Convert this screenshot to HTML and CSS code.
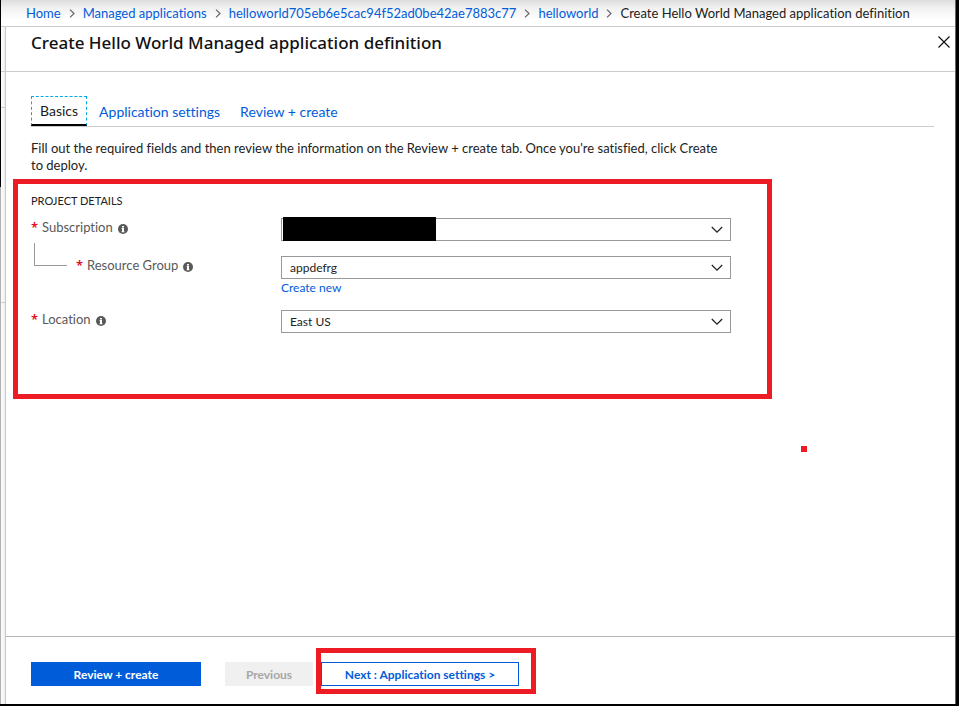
FILE: index.html
```html
<!DOCTYPE html>
<html lang="en">
<head>
<meta charset="utf-8">
<meta name="viewport" content="width=device-width, initial-scale=1">
<title>Create Hello World Managed application definition</title>
<link rel="stylesheet" href="styles.css">
</head>
<body>
<svg class="defs" aria-hidden="true">
  <symbol id="info" viewBox="0 0 10 10"><circle cx="5" cy="5" r="5" fill="#595959"/><path d="M4 2h2v1.500H4zM3.500 4H6v3.500h.6v.8H3.400v-.8H4V4.800h-.5z" fill="#fff"/></symbol>
  <symbol id="chevron" viewBox="0 0 12 8"><path d="M.8 1 6 6.200 11.200 1" fill="none" stroke="#222" stroke-width="1.300"/></symbol>
  <symbol id="crumb" viewBox="0 0 6 9"><path d="M1 .6 5 4.500 1 8.400" fill="none" stroke="#666" stroke-width="1.200"/></symbol>
</svg>
<div class="window">
  <nav class="breadcrumb" aria-label="Breadcrumb">
    <a href="#">Home</a>
    <svg class="sep"><use href="#crumb"/></svg>
    <a href="#">Managed applications</a>
    <svg class="sep"><use href="#crumb"/></svg>
    <a href="#">helloworld705eb6e5cac94f52ad0be42ae7883c77</a>
    <svg class="sep"><use href="#crumb"/></svg>
    <a href="#">helloworld</a>
    <svg class="sep"><use href="#crumb"/></svg>
    <span>Create Hello World Managed application definition</span>
  </nav>
  <div class="workspace">
    <div class="rail" aria-hidden="true"><i class="rail-head"></i><i class="rail-tools"></i><i class="rail-body"></i></div>
    <main class="blade">
      <header class="blade-head">
        <h1>Create Hello World Managed application definition</h1>
        <button class="close" type="button" aria-label="Close"><svg viewBox="0 0 12 12"><path d="M.5.5l11 11M11.500.5l-11 11" stroke="#111" stroke-width="1.200"/></svg></button>
      </header>
      <form class="content" id="definition">
        <div class="tabs" role="tablist">
          <button class="tab active" type="button" role="tab" aria-selected="true">Basics</button>
          <button class="tab" type="button" role="tab" aria-selected="false">Application settings</button>
          <button class="tab" type="button" role="tab" aria-selected="false">Review + create</button>
        </div>
        <p class="intro">Fill out the required fields and then review the information on the Review + create tab. Once you're satisfied, click Create to deploy.</p>
        <section class="details">
          <h2>PROJECT DETAILS</h2>
          <div class="row">
            <div class="label"><b>*</b><label for="subscription">Subscription</label><svg class="info"><use href="#info"/></svg></div>
            <div class="field"><select id="subscription"><option></option></select><svg class="chevron"><use href="#chevron"/></svg><span class="redacted"></span></div>
          </div>
          <div class="row child">
            <div class="label"><i class="elbow"></i><b>*</b><label for="group">Resource Group</label><svg class="info"><use href="#info"/></svg></div>
            <div class="field"><select id="group"><option>appdefrg</option></select><svg class="chevron"><use href="#chevron"/></svg></div>
          </div>
          <a class="create-new" href="#">Create new</a>
          <div class="row">
            <div class="label"><b>*</b><label for="location">Location</label><svg class="info"><use href="#info"/></svg></div>
            <div class="field"><select id="location"><option>East US</option></select><svg class="chevron"><use href="#chevron"/></svg></div>
          </div>
        </section>
        <span class="marker"></span>
      </form>
      <footer class="actions">
        <button class="btn primary" type="submit" form="definition">Review + create</button>
        <button class="btn previous" type="button" disabled>Previous</button>
        <div class="next-wrap"><button class="btn next" type="button">Next : Application settings &gt;</button></div>
      </footer>
    </main>
  </div>
</div>
</body>
</html>
```
FILE: styles.css
```css
* { box-sizing: border-box; }
body {
  margin: 0;
  min-height: 100vh;
  display: flex;
  background: #000;
  color: #222;
  font: 13px/17px Lato, "Noto Sans", sans-serif;
  font-variant-ligatures: none;
}
button, select { font: inherit; font-variant-ligatures: none; color: inherit; }
a { color: #015cda; text-decoration: none; }
.defs { position: absolute; width: 0; height: 0; }

.window {
  position: relative;
  flex: 1;
  min-width: 0;
  display: flex;
  flex-direction: column;
  margin: 0 3px 2px 1px;
  border-right: 1px solid #666;
  background: #fff;
}
.window::before {
  content: "";
  position: absolute;
  left: -1px;
  top: 187px;
  bottom: 0;
  width: 1px;
  background: #b0b0b0;
}
.breadcrumb {
  display: flex;
  align-items: center;
  gap: 8px;
  height: 27px;
  padding-left: 25px;
  border-bottom: 1px solid #ccc;
  background: linear-gradient(#dcdcdc, #f1f1f1 8px, #fff 20px);
  white-space: nowrap;
}
.sep { flex: none; width: 6px; height: 9px; }

.workspace { flex: 1; display: flex; }
.rail {
  display: flex;
  flex-direction: column;
  width: 5px;
  border-right: 1px solid #c8c8c8;
  background: linear-gradient(90deg, #fff, #eee);
}
.rail i { border-bottom: 1px solid #ccc; }
.rail-head { height: 45px; }
.rail-tools { height: 36px; }
.rail-body { height: 195px; }

.blade { flex: 1; min-width: 0; display: flex; flex-direction: column; }
.blade-head {
  display: flex;
  justify-content: space-between;
  align-items: flex-start;
  height: 45px;
  padding: 4px 5px 0 25px;
  border-bottom: 1px solid #ccc;
}
h1 { margin: 0; font-family: "Noto Sans", sans-serif; font-size: 17px; line-height: 24px; font-weight: 500; color: #111; }
.close { padding: 5px 0; border: 0; background: none; line-height: 0; }
.close svg { width: 12px; height: 12px; }

.content { position: relative; flex: 1; padding: 24px 21px 0 25px; }
.tabs { display: flex; height: 31px; border-bottom: 1px solid #ccc; }
.tab {
  height: 30px;
  margin-right: 12px;
  padding: 0 4px;
  border: 0;
  background: none;
  color: #015cda;
  font-size: 14px;
}
.tab.active {
  padding: 0 8px;
  margin-right: 8px;
  border: 1px dashed #00abec;
  border-bottom: 2px solid #000;
  color: #1b1b1b;
}
.intro { max-width: 700px; margin: 13px 0 5px; }

.details {
  max-width: 759px;
  min-height: 220px;
  margin-left: -18px;
  padding: 9px 36px 0 13px;
  border: 5px solid #ed1c24;
}
h2 { margin: 0 0 9px; font-size: 11px; line-height: 16px; font-weight: 400; }
.row { display: flex; min-height: 23px; }
.row + .row { margin-top: 15px; }
.label { flex: 0 0 250px; display: flex; height: 19px; align-items: center; color: #595959; }
.label b { width: 11px; color: #e00b1c; font-family: "Noto Sans", sans-serif; font-weight: 600; }
.info { width: 10px; height: 10px; margin: 3px 0 0 5px; }
.elbow { align-self: flex-end; width: 33px; height: 23px; margin: 0 9px 9px 3px; border: solid #999; border-width: 0 0 1px 1px; }
.field { position: relative; flex: 1; height: 23px; }
.field select {
  appearance: none;
  display: block;
  width: 100%;
  height: 23px;
  padding: 0 30px 0 8px;
  border: 1px solid #999;
  border-radius: 0;
  background: #fff;
  font-size: 12px;
}
.chevron { position: absolute; right: 8px; top: 8px; width: 12px; height: 8px; pointer-events: none; }
.redacted { position: absolute; left: 2px; top: -1px; width: 153px; height: 24px; background: #000; }
.create-new { display: block; width: max-content; margin: 0 0 14px 250px; font-size: 12px; }
.marker { position: absolute; left: 795px; top: 374px; width: 6px; height: 6px; background: #ed1c24; }

.actions { display: flex; height: 68px; padding: 25px 25px 0; border-top: 1px solid #b5b5b5; }
.btn { height: 24px; padding: 0; border: 0; font-size: 12px; font-weight: 700; }
.primary { width: 170px; margin-right: 24px; background: #015cda; color: #fff; }
.previous { width: 88px; margin-right: 8px; background: #f0f0f0; color: #a6a6a6; }
.next-wrap { position: relative; height: 24px; }
.next-wrap::after {
  content: "";
  position: absolute;
  inset: -14px -17px -8px -5px;
  border: 5px solid #ed1c24;
  pointer-events: none;
}
.next { width: 198px; border: 1px solid #015cda; background: #fff; color: #015cda; }
```
